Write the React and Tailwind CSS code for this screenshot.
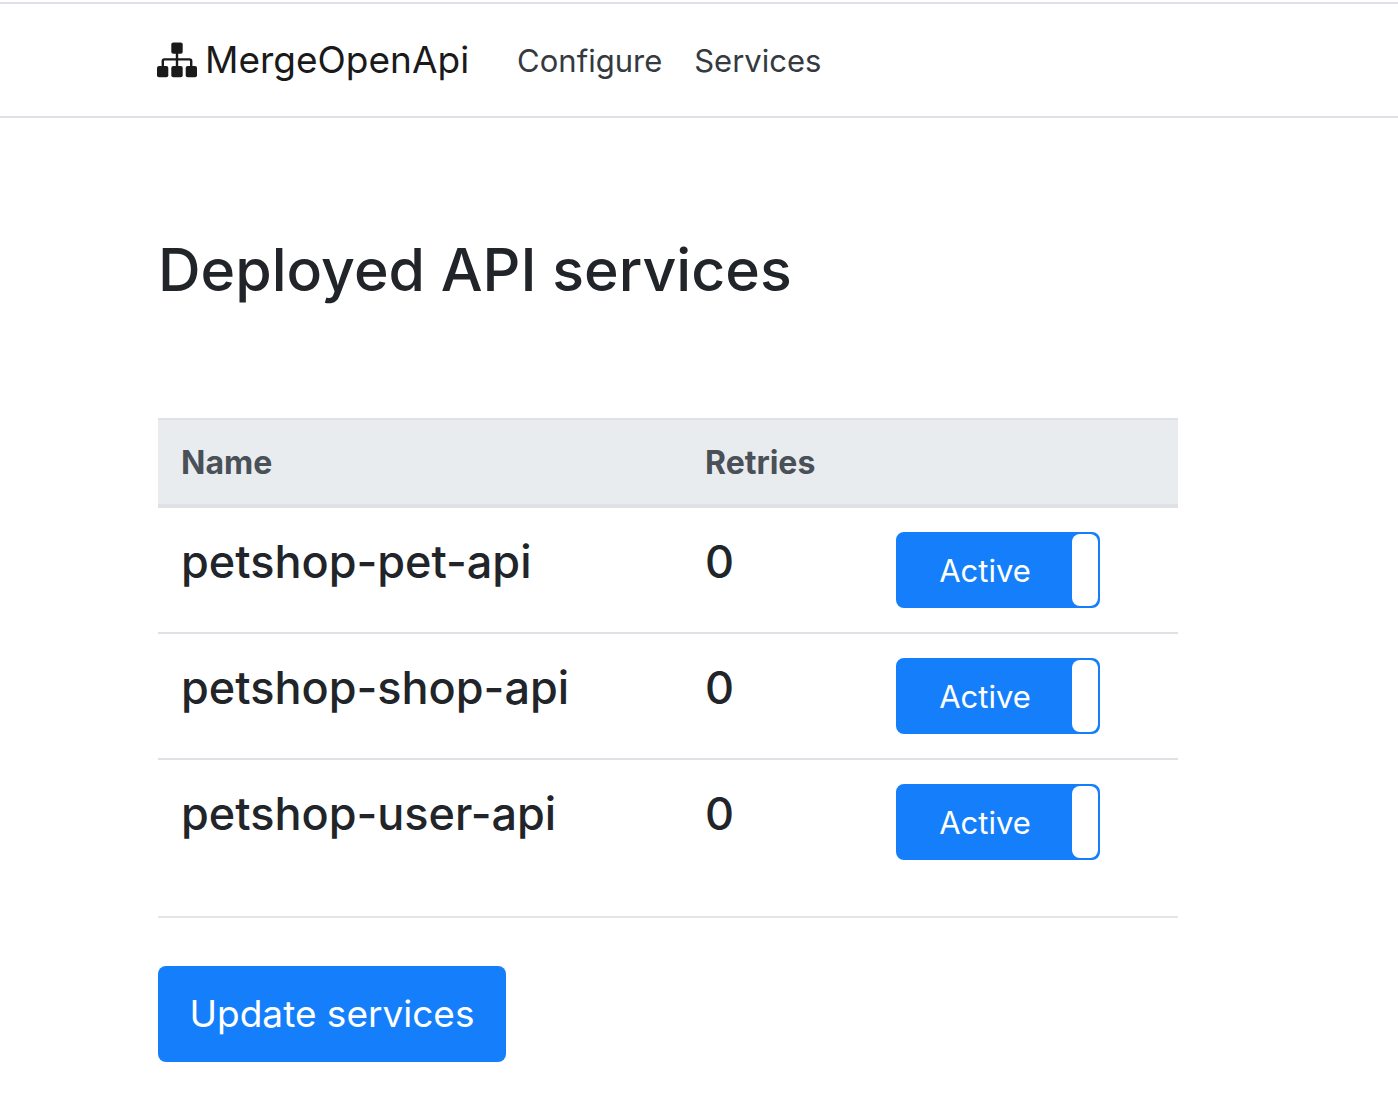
import { useState } from "react";

const initialServices = [
  { name: "petshop-pet-api", retries: 0, active: true },
  { name: "petshop-shop-api", retries: 0, active: true },
  { name: "petshop-user-api", retries: 0, active: true },
];

function SitemapIcon() {
  return (
    <svg viewBox="0 0 40 36" className="h-9 w-10" fill="currentColor" aria-hidden="true">
      <rect x="14.3" y="0.6" width="11.4" height="11.2" rx="2" />
      <rect x="0" y="24" width="11.3" height="11.2" rx="2" />
      <rect x="14.3" y="24" width="11.4" height="11.2" rx="2" />
      <rect x="28.7" y="24" width="11.3" height="11.2" rx="2" />
      <path
        d="M20 11v14M5.8 25v-6a1.6 1.6 0 0 1 1.6-1.6h25.2a1.6 1.6 0 0 1 1.6 1.6v6"
        fill="none"
        stroke="currentColor"
        strokeWidth="2.4"
      />
    </svg>
  );
}

function Toggle({ label, checked, onChange }) {
  return (
    <label className="flex h-[76px] w-[204px] cursor-pointer overflow-hidden rounded-lg border-2 border-[#157ffb] bg-[#157ffb]">
      <input
        type="checkbox"
        role="switch"
        className="sr-only"
        aria-label={label}
        checked={checked}
        onChange={onChange}
      />
      {!checked && <span className="w-[26px] rounded-lg bg-white" />}
      <span className="flex flex-1 items-center justify-center pt-0.5 text-[31px] leading-[48px] text-white">
        {checked ? "Active" : "Inactive"}
      </span>
      {checked && <span className="w-[26px] rounded-lg bg-white" />}
    </label>
  );
}

export default function App() {
  const [services, setServices] = useState(initialServices);
  const toggle = (name) =>
    setServices((list) =>
      list.map((s) => (s.name === name ? { ...s, active: !s.active } : s))
    );

  return (
    <div className="min-h-screen bg-white pt-0.5 font-['Inter',sans-serif] text-[#212529]">
      <header className="border-y-2 border-[#dee0e5]">
        <nav className="flex h-28 items-center pr-8 pl-[157px]">
          <a href="#home" className="flex items-center gap-2 text-[37px] text-[#1a1a1a]">
            <SitemapIcon />
            MergeOpenApi
          </a>
          <a href="#configure" className="ml-12 pt-0.5 text-[31px] text-[#343a40]">Configure</a>
          <a href="#services" className="ml-8 pt-0.5 text-[31px] text-[#343a40]">Services</a>
        </nav>
      </header>

      <main className="mr-[220px] ml-[158px] pt-[114px]">
        <h1 className="text-[59px] leading-[76px] font-medium">Deployed API services</h1>

        <table className="mt-[110px] w-full table-fixed border-collapse text-left">
          <colgroup>
            <col className="w-[524px]" />
            <col className="w-[190px]" />
            <col />
          </colgroup>
          <thead>
            <tr className="h-[87px] border-t-2 border-b-4 border-[#dee2e6] bg-[#e9ecef] text-[32px] leading-[48px] text-[#495057]">
              <th className="px-[23px] pt-0.5 font-bold">Name</th>
              <th className="px-[23px] pt-0.5 font-bold">Retries</th>
              <th aria-label="Status" />
            </tr>
          </thead>
          <tbody>
            {services.map((s) => (
              <tr key={s.name} className="border-t-2 border-[#dee2e6] text-[45px] leading-[60px] font-medium">
                <td className="px-[23px] pt-6 align-top">{s.name}</td>
                <td className="px-[23px] pt-6 align-top">{s.retries}</td>
                <td className="px-6 py-6 align-top font-normal">
                  <Toggle label={s.name} checked={s.active} onChange={() => toggle(s.name)} />
                </td>
              </tr>
            ))}
          </tbody>
        </table>

        <hr className="mt-8 border-t-2 border-[#e5e5e5]" />
        <button
          type="button"
          className="mt-12 mb-8 h-24 w-[348px] rounded-lg bg-[#157ffb] text-[37px] text-white"
        >
          Update services
        </button>
      </main>
    </div>
  );
}
